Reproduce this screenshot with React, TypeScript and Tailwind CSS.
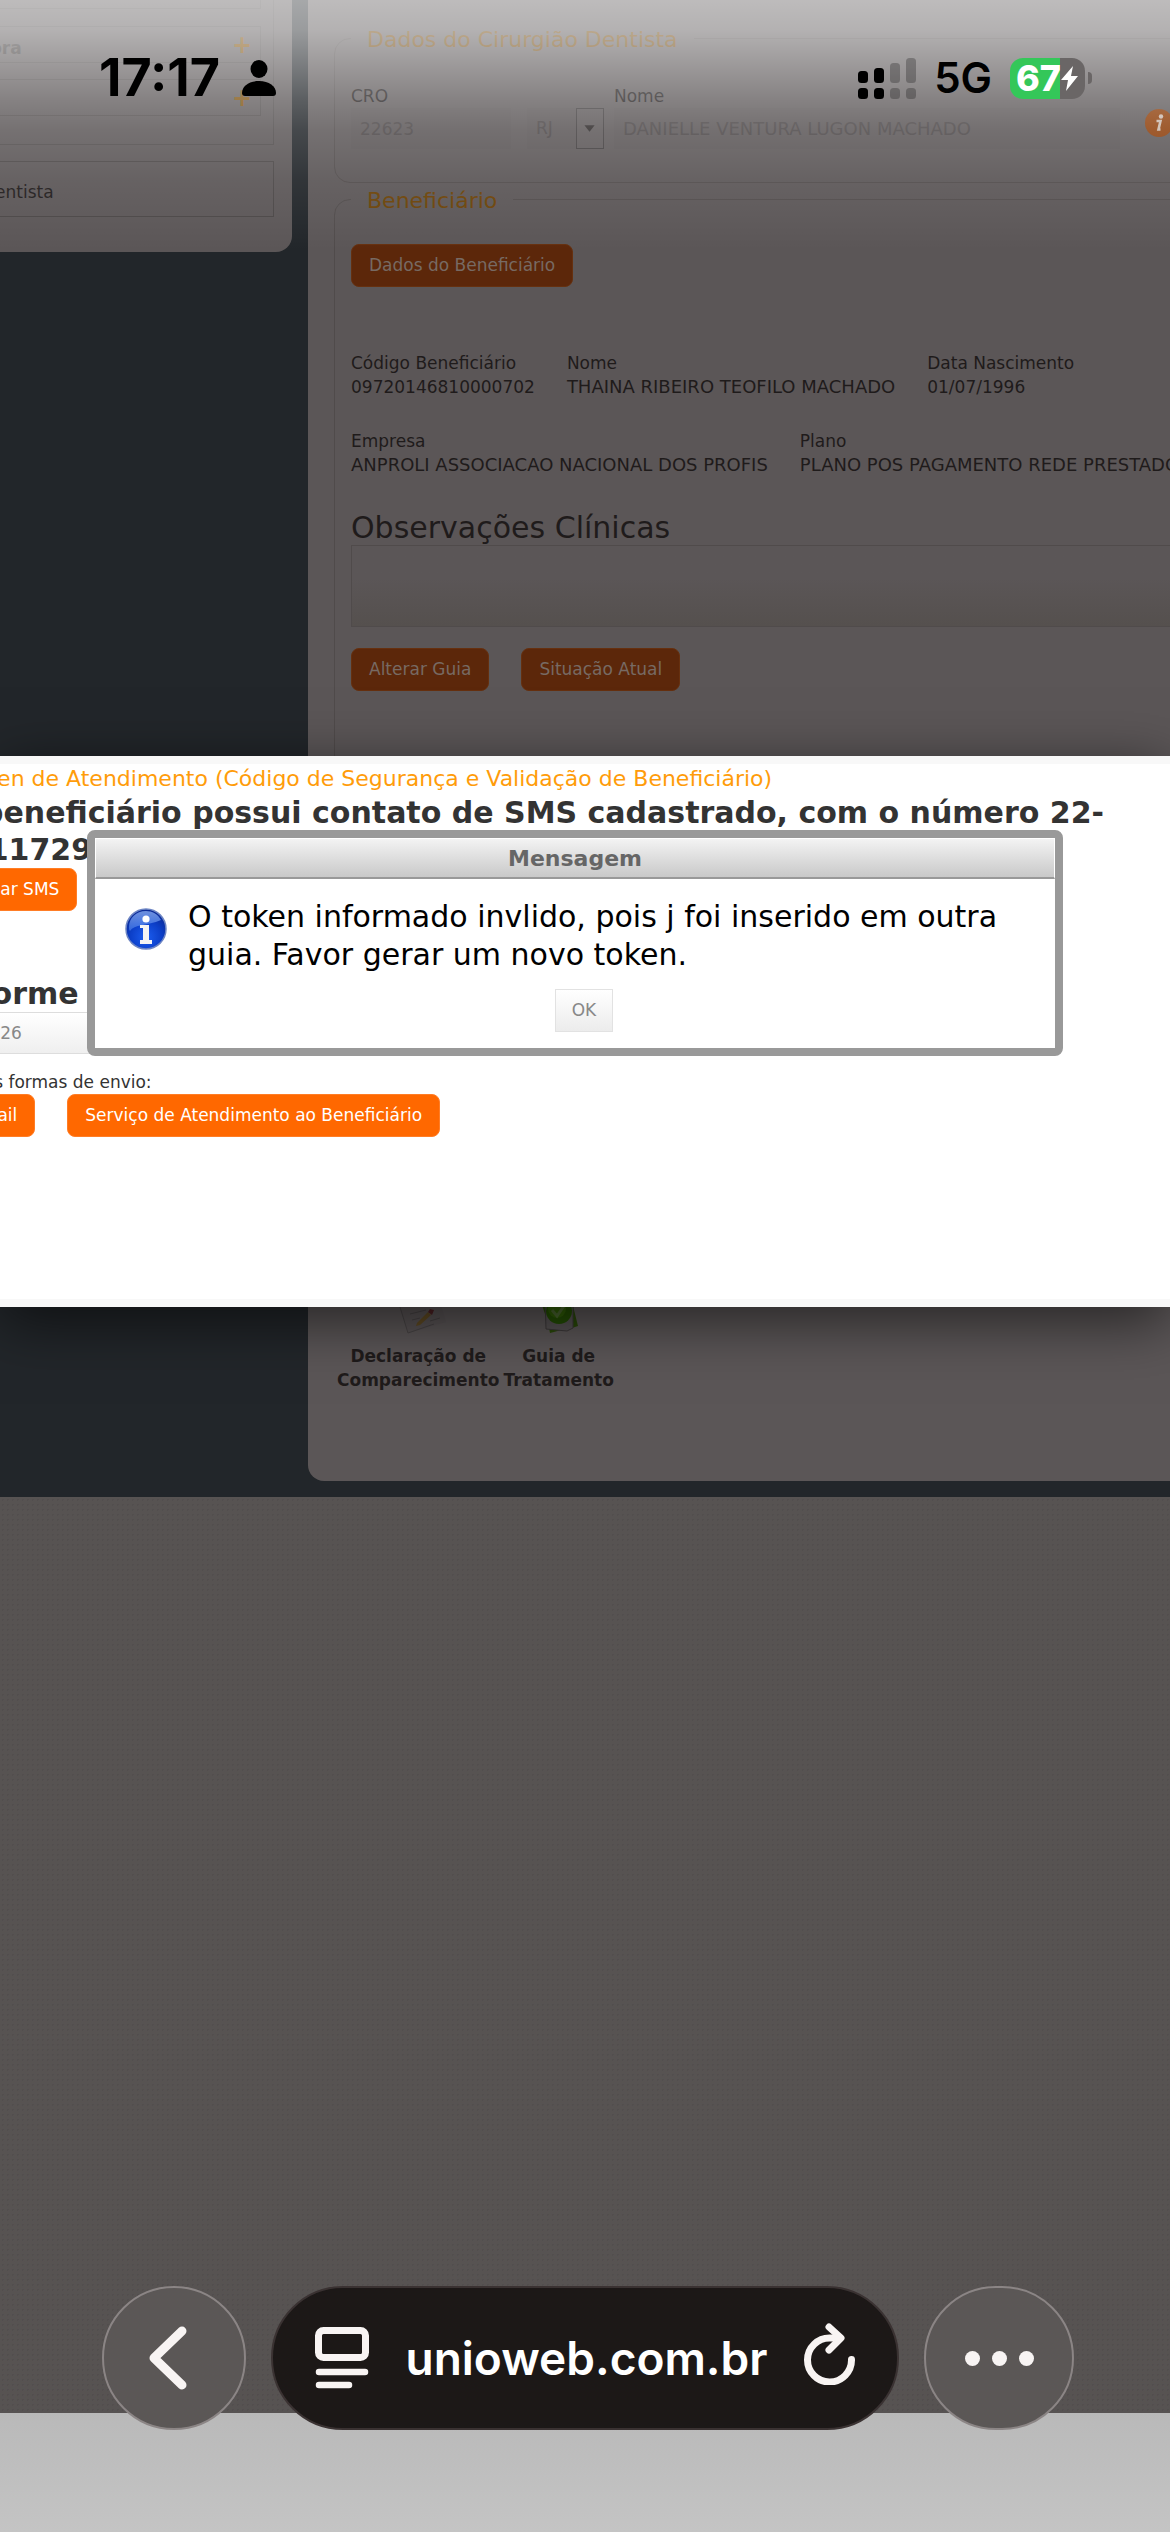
import type { ReactNode } from "react";

const PATIENT_ROWS = [
  [
    { label: "Código Beneficiário", value: "09720146810000702" },
    { label: "Nome", value: "THAINA RIBEIRO TEOFILO MACHADO", caps: true },
    { label: "Data Nascimento", value: "01/07/1996" },
  ],
  [
    { label: "Empresa", value: "ANPROLI ASSOCIACAO NACIONAL DOS PROFIS", caps: true },
    { label: "Plano", value: "PLANO POS PAGAMENTO REDE PRESTADORA", caps: true },
  ],
];

function DimButton({ children }: { children: ReactNode }) {
  return (
    <button
      type="button"
      className="h-[43px] shrink-0 rounded-lg border border-[#66300f] bg-[#5c270a] px-[17px] text-[17px] whitespace-nowrap text-[#776a63]"
    >
      {children}
    </button>
  );
}

function OrangeButton({ children }: { children: ReactNode }) {
  return (
    <button
      type="button"
      className="h-[43px] shrink-0 rounded-lg border border-[#ff7d26] bg-[#ff6800] px-[17px] text-[17px] whitespace-nowrap text-white"
    >
      {children}
    </button>
  );
}

function Sidebar() {
  return (
    <aside className="h-[252px] w-[292px] shrink-0 rounded-br-2xl bg-[#5b5657] pr-[18px] text-[17px]">
      <div className="h-[145px] border-r border-b border-[#4f4b4b] pr-3">
        <div className="h-[9px] border-r border-b border-[#4f4b4b]" />
        <div className="mt-[17px] flex h-[37px] items-center justify-between border border-l-0 border-[#4f4b4b] pr-2">
          <span className="-ml-[80px] pt-2 font-bold text-[#3a3636]">Operadora</span>
          <span className="text-[24px] font-bold text-[#7a4c08]">+</span>
        </div>
        <div className="mt-4 flex h-[37px] items-center justify-end border border-l-0 border-[#4f4b4b] pr-2">
          <span className="text-[24px] font-bold text-[#7a4c08]">+</span>
        </div>
      </div>
      <div className="mt-4 flex h-14 items-center border border-l-0 border-[#4a4646] pt-2">
        <span className="-ml-[18px] text-[#1f1b1b]">Dentista</span>
      </div>
    </aside>
  );
}

function DentistFields() {
  return (
    <fieldset className="-mr-8 rounded-2xl border border-[#504b4b] px-4 pb-[33px]">
      <legend className="px-4 pt-1 text-[22px] leading-7 text-[#6b4206]">
        Dados do Cirurgião Dentista
      </legend>
      <div className="flex pt-[30px]">
        <div className="w-[160px] shrink-0">
          <label htmlFor="cro" className="block text-[17px] leading-6 text-[#1f1b1b]">
            CRO
          </label>
          <input
            id="cro"
            readOnly
            value="22623"
            className="block h-[41px] w-full bg-[#595455] px-[9px] text-[17px] text-[#484344]"
          />
        </div>
        <div className="relative mt-6 ml-4 h-[41px] w-[77px] shrink-0">
          <select
            aria-label="UF"
            className="h-full w-full appearance-none bg-[#595455] pl-[9px] text-[17px] text-[#484344]"
          >
            <option>RJ</option>
          </select>
          <svg
            viewBox="0 0 28 41"
            className="pointer-events-none absolute top-0 right-0 h-[41px] w-7 border border-[#3f3b3c] bg-[#5b5657]"
          >
            <path d="M8 17h11l-5.500 7z" fill="#2b2727" />
          </svg>
        </div>
        <div className="ml-[10px] w-[506px] shrink-0">
          <label htmlFor="nome" className="block text-[17px] leading-6 text-[#1f1b1b]">
            Nome
          </label>
          <input
            id="nome"
            readOnly
            value="DANIELLE VENTURA LUGON MACHADO"
            className="block h-[41px] w-full bg-[#595455] px-[9px] text-[18px] text-[#484344]"
          />
        </div>
        <svg viewBox="0 0 28 28" className="mt-[25px] ml-[25px] size-7 shrink-0">
          <circle cx="14" cy="14" r="14" fill="#8c3c07" />
          <circle cx="16" cy="7.500" r="2.200" fill="#c9b8ac" />
          <path
            d="M11.500 12h4l-2 8.500h2"
            fill="none"
            stroke="#c9b8ac"
            strokeWidth="2.600"
          />
        </svg>
      </div>
    </fieldset>
  );
}

function PatientFields() {
  return (
    <fieldset className="-mr-8 h-[1017px] rounded-2xl border border-[#504b4b] px-4">
      <legend className="px-4 pt-1 text-[22px] leading-7 text-[#6b4206]">
        Beneficiário
      </legend>
      <div className="mt-[29px] flex">
        <DimButton>Dados do Beneficiário</DimButton>
      </div>
      <div className="mt-16 flex flex-col gap-[30px]">
        {PATIENT_ROWS.map((row, i) => (
          <dl key={i} className="flex gap-8">
            {row.map((item) => (
              <div
                key={item.label}
                className="shrink-0 text-[17px] leading-6 whitespace-nowrap text-[#1f1b1b]"
              >
                <dt>{item.label}</dt>
                <dd className={item.caps ? "text-[18px] leading-6" : ""}>{item.value}</dd>
              </div>
            ))}
          </dl>
        ))}
      </div>
      <label
        htmlFor="obs"
        className="mt-[34px] block text-[30px] leading-[34px] text-[#1f1b1b]"
      >
        Observações Clínicas
      </label>
      <textarea
        id="obs"
        readOnly
        className="block h-[82px] w-full resize-none border border-[#504b4b] bg-linear-to-b from-[#5b5657] from-40% to-[#55504e]"
      />
      <div className="mt-[21px] flex gap-8">
        <DimButton>Alterar Guia</DimButton>
        <DimButton>Situação Atual</DimButton>
      </div>
    </fieldset>
  );
}

function Shortcuts() {
  return (
    <div className="mt-[90px] flex gap-1 pr-3 pb-[89px] pl-[3px] text-center text-[17px] leading-6 font-bold text-[#1f1b1b]">
      <a href="#declaracao" className="flex flex-col items-center gap-[10px]">
        <svg viewBox="0 0 60 44" className="h-11 w-[60px]">
          <path d="M8 4 46-6l12 38-38 11z" fill="#585354" />
          <path
            d="M8 4l12 39 26-9M22 24l16-4M24 30l8-2M42 31l10-3"
            fill="none"
            stroke="#484445"
            strokeWidth="1"
          />
          <path d="M29 33l11-11 3 3-11 10-4 1z" fill="#5f4a22" />
          <path d="M40 22l2-3 4 1-2 5z" fill="#4d2023" />
        </svg>
        <span>
          Declaração de
          <br />
          Comparecimento
        </span>
      </a>
      <a href="#guia" className="flex flex-col items-center gap-[10px]">
        <svg viewBox="0 0 48 44" className="h-11 w-12">
          <path d="M6 12l4 12 2-10zM36 8l7 28-6 2zM14 38l16 1-15 4z" fill="#294808" />
          <path d="M10 6h28v32l-6 3-21-2z" fill="#555152" stroke="#3c3839" />
          <circle cx="24" cy="21" r="13" fill="#234d03" />
          <circle cx="22" cy="19" r="9" fill="#2f5c06" />
          <path
            d="M17 20l5 6 9-13"
            fill="none"
            stroke="#4a6530"
            strokeWidth="3"
          />
        </svg>
        <span>
          Guia de
          <br />
          Tratamento
        </span>
      </a>
    </div>
  );
}

function TokenDialog() {
  return (
    <section className="absolute inset-x-0 top-[756px] overflow-hidden border-y-8 border-[#f8f8f8] bg-white pb-[162px] shadow-[0_14px_56px_rgba(0,0,0,0.6)]">
      <div className="-ml-[54px]">
        <h2 className="pl-4 text-[22px] leading-[30px] whitespace-nowrap text-[#ff9c0a]">
          Token de Atendimento (Código de Segurança e Validação de Beneficiário)
        </h2>
        <p className="text-[30px] leading-[37px] font-bold whitespace-nowrap text-[#333]">
          O beneficiário possui contato de SMS cadastrado, com o número 22-
          <br />
          9911729
        </p>
        <div className="flex">
          <OrangeButton>Enviar SMS</OrangeButton>
        </div>
        <label
          htmlFor="token"
          className="mt-16 block text-[30px] leading-[37px] font-bold text-[#333]"
        >
          Informe
        </label>
        <input
          id="token"
          readOnly
          value="000026"
          className="block h-[42px] w-[320px] border border-[#ddd] bg-linear-to-b from-white to-[#efefef] px-[10px] text-[17px] text-[#888]"
        />
        <p className="mt-4 text-[17px] leading-6 text-[#333]">
          Outras formas de envio:
        </p>
        <div className="flex gap-8">
          <OrangeButton>E-mail</OrangeButton>
          <OrangeButton>Serviço de Atendimento ao Beneficiário</OrangeButton>
        </div>
      </div>
    </section>
  );
}

function MessageDialog() {
  return (
    <div
      role="alertdialog"
      aria-labelledby="msg-title"
      className="absolute top-[830px] right-[107px] left-[87px] rounded-lg border-8 border-[#999] bg-white"
    >
      <h2
        id="msg-title"
        className="h-[41px] border border-b-2 border-white border-b-[#999] bg-linear-to-b from-[#f3f3f3] to-[#c9c9c9] text-center text-[22px] leading-10 font-bold text-[#666]"
      >
        Mensagem
      </h2>
      <div className="flex gap-[21px] pt-[19px] pr-7 pl-[30px]">
        <svg viewBox="0 0 42 42" className="mt-[10px] size-[42px] shrink-0">
          <defs>
            <radialGradient id="ball" cx="0.5" cy="0.7" r="0.65">
              <stop offset="0" stopColor="#1c5df0" />
              <stop offset="0.6" stopColor="#0c3fc8" />
              <stop offset="1" stopColor="#0b2b98" />
            </radialGradient>
            <linearGradient id="gloss" x1="0" y1="0" x2="0" y2="1">
              <stop offset="0" stopColor="#8fb2f5" />
              <stop offset="1" stopColor="#3e74e4" />
            </linearGradient>
          </defs>
          <circle cx="21" cy="21" r="20" fill="url(#ball)" stroke="#6e86c4" strokeWidth="1.500" />
          <path
            d="M21 3C11 3 4 10 4 19c0 2 0 3 1 4 4-7 17-5 31-11C33 6 27 3 21 3z"
            fill="url(#gloss)"
            opacity="0.75"
          />
          <circle cx="21" cy="11" r="3.600" fill="#fff" />
          <path d="M15 17h9v15h3v4H15v-4h3V20h-3z" fill="#f4f4f4" />
        </svg>
        <p className="text-[30px] leading-[38px] text-black">
          O token informado invlido, pois j foi inserido em outra guia. Favor gerar um novo token.
        </p>
      </div>
      <div className="flex justify-center pt-[15px] pb-4 pl-[18px]">
        <button
          type="button"
          className="h-[43px] border border-[#e2e2e2] bg-linear-to-b from-white to-[#ececec] px-4 text-[17px] text-[#888]"
        >
          OK
        </button>
      </div>
    </div>
  );
}

function StatusBar() {
  return (
    <div className="absolute inset-x-0 top-0 flex h-[156px] items-center justify-between pr-[78px] pl-[99px] font-['Inter',sans-serif] text-black">
      <div className="flex items-center gap-[22px]">
        <span className="text-[52px] leading-none font-bold">17:17</span>
        <svg viewBox="0 0 34 36" className="h-9 w-[34px]">
          <ellipse cx="17" cy="9" rx="8.500" ry="9" />
          <path d="M0 33C0 26 7 21 17 21s17 5 17 12c0 2-1 3-3 3H3c-2 0-3-1-3-3z" />
        </svg>
      </div>
      <div className="flex items-center gap-[18px]">
        <svg viewBox="0 0 58 41" className="h-[41px] w-[58px]">
          <rect x="0" y="13" width="10" height="12" rx="3.500" />
          <rect x="16" y="10" width="10" height="15" rx="3.500" />
          <rect x="32" y="5" width="10" height="20" rx="3.500" opacity="0.25" />
          <rect x="48" y="0" width="10" height="25" rx="3.500" opacity="0.25" />
          <rect x="0" y="30" width="10" height="11" rx="3.500" />
          <rect x="16" y="30" width="10" height="11" rx="3.500" />
          <rect x="32" y="30" width="10" height="11" rx="3.500" opacity="0.25" />
          <rect x="48" y="30" width="10" height="11" rx="3.500" opacity="0.25" />
        </svg>
        <span className="text-[42px] leading-none font-semibold">5G</span>
        <div className="flex items-center gap-[3px]">
          <div className="flex h-[41px] w-[75px] items-center overflow-hidden rounded-[13px] bg-[linear-gradient(90deg,#34c759_50px,#6a6666_50px)] pl-[6px]">
            <span className="text-[36px] leading-none font-extrabold text-white">67</span>
            <svg viewBox="0 0 17 25" className="h-[25px] w-[17px] shrink-0">
              <path d="M12 0 0 14h7L5 25 17 10h-7z" fill="#fff" />
            </svg>
          </div>
          <div className="h-3 w-1 rounded-r-full bg-[#6a6666]" />
        </div>
      </div>
    </div>
  );
}

function BrowserBar() {
  return (
    <nav className="absolute inset-x-0 bottom-[102px] flex gap-[25px] pr-[96px] pl-[102px] font-['Inter',sans-serif]">
      <button
        type="button"
        aria-label="Voltar"
        className="flex size-36 shrink-0 items-center justify-center rounded-full border-2 border-[#8b8585] bg-[#5b5756]"
      >
        <svg viewBox="0 0 38 64" className="mr-3 h-16 w-[38px]" fill="none">
          <path
            d="M33 5 5 32l28 27"
            stroke="#f8f4f3"
            strokeWidth="9"
            strokeLinecap="round"
            strokeLinejoin="round"
          />
        </svg>
      </button>
      <div className="flex h-36 flex-1 items-center justify-between rounded-full border-2 border-[#3a3232] bg-[#1c1817] pr-[41px] pl-[42px]">
        <svg viewBox="0 0 54 62" className="h-[62px] w-[54px]" fill="none" stroke="#f8f4f3" strokeLinecap="round">
          <rect x="3.500" y="3.500" width="47" height="27" rx="5" strokeWidth="7" />
          <path d="M4 45h46M4 58h30" strokeWidth="6.500" />
        </svg>
        <span className="text-[46px] leading-none font-semibold text-white">
          unioweb.com.br
        </span>
        <button type="button" aria-label="Recarregar" className="mb-2">
          <svg
            viewBox="0 0 52 62"
            className="h-[62px] w-[52px]"
            fill="none"
            stroke="#f8f4f3"
            strokeWidth="7"
            strokeLinecap="round"
            strokeLinejoin="round"
          >
            <path d="M47.500 36.500A22 22 0 1 1 26 15h10" />
            <path d="M25 4l12 11-12 12" />
          </svg>
        </button>
      </div>
      <button
        type="button"
        aria-label="Mais"
        className="flex h-36 w-[150px] shrink-0 items-center justify-center gap-3 rounded-full border-2 border-[#8b8585] bg-[#5b5756]"
      >
        <span className="size-[15px] rounded-full bg-[#f8f4f3]" />
        <span className="size-[15px] rounded-full bg-[#f8f4f3]" />
        <span className="size-[15px] rounded-full bg-[#f8f4f3]" />
      </button>
    </nav>
  );
}

export default function App() {
  return (
    <div className="relative flex min-h-screen flex-col overflow-hidden bg-[#bfbfbf] font-['DejaVu_Sans',Verdana,sans-serif]">
      <main className="flex items-start gap-4 bg-[#22262a] pb-4">
        <Sidebar />
        <div className="min-w-0 flex-1 rounded-bl-2xl bg-[#5b5657] pt-[22px] pl-[26px]">
          <DentistFields />
          <PatientFields />
          <Shortcuts />
        </div>
      </main>

      {/* woven page background */}
      <div className="flex-1 bg-[#575352] bg-[radial-gradient(#524e4e_1px,transparent_1px)] bg-[size:5px_5px]">
        <div className="h-full bg-linear-to-b from-transparent from-50% to-black/25" />
      </div>
      <div className="h-[119px] bg-linear-to-b from-[#b9b9b9] to-[#c4c4c4]" />

      <TokenDialog />
      <MessageDialog />

      {/* light haze behind the status bar */}
      <div className="pointer-events-none absolute inset-x-0 top-0 h-[250px] bg-[linear-gradient(rgba(255,255,255,0.6),rgba(255,255,255,0.54)_30px,rgba(255,255,255,0.42)_60px,rgba(255,255,255,0.26)_100px,rgba(255,255,255,0.16)_130px,rgba(255,255,255,0.07)_180px,transparent)]" />
      <StatusBar />
      <BrowserBar />
    </div>
  );
}
